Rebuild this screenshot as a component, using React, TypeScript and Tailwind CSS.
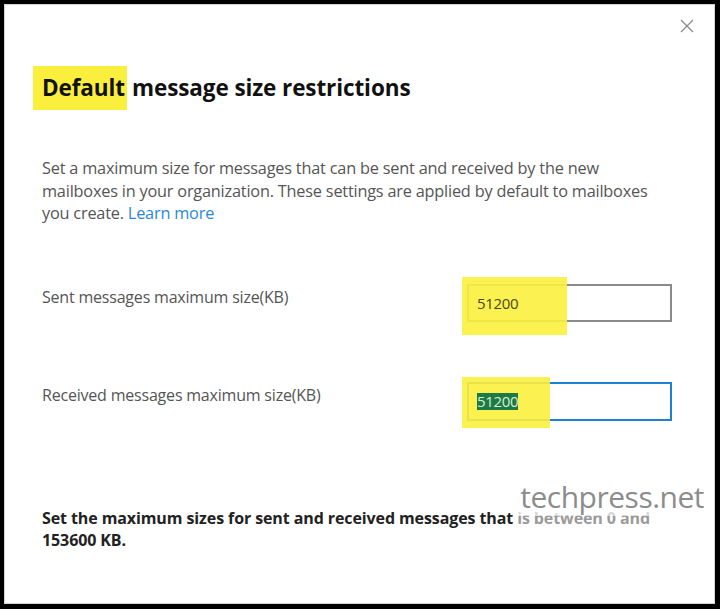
import { useState } from 'react'

const font = { fontFamily: '"Open Sans", "Noto Sans", Arial, sans-serif' }

export default function App() {
  const [sent, setSent] = useState('51200')

  return (
    <div className="w-[720px] h-[609px] bg-black pt-[4px] pl-[4px] pr-[5px] pb-[5px]" style={font}>
      <div className="relative h-full bg-white border border-[#d4d4d4] flex flex-col">
        {/* Close */}
        <div className="flex justify-end pt-[13px] pr-[19px]">
          <button className="w-[16px] h-[16px] text-[#8a8a8a]" title="Close">
            <svg width="16" height="16" viewBox="0 0 16 16" fill="none" stroke="currentColor" strokeWidth="1.3">
              <line x1="2" y1="2" x2="14" y2="14" />
              <line x1="14" y1="2" x2="2" y2="14" />
            </svg>
          </button>
        </div>

        {/* Title */}
        <div className="pl-[28px] mt-[32px] flex">
          <h1 className="flex items-center text-[22.5px] font-bold text-[#111] tracking-[-0.1px]">
            <span className="bg-[#fbef3d] h-[44px] flex items-center pl-[9px] pr-[2px]">Default</span>
            <span className="ml-[5px]">message size restrictions</span>
          </h1>
        </div>

        {/* Description */}
        <p className="mt-[47px] pl-[37px] text-[16.3px] leading-[22.5px] text-[#555] tracking-[-0.2px]">
          Set a maximum size for messages that can be sent and received by the new
          <br />
          mailboxes in your organization. These settings are applied by default to mailboxes
          <br />
          you create. <a className="text-[#2b88d8]">Learn more</a>
        </p>

        {/* Fields */}
        <div className="mt-[59px] flex items-center pl-[37px] pr-[42px]">
          <label className="flex-1 text-[16px] text-[#555] tracking-[-0.2px] -mt-[12px]">Sent messages maximum size(KB)</label>
          <div className="relative w-[205px] h-[38px] border-2 border-[#8a8a8a] bg-white">
            <div className="absolute -left-[7px] -top-[9px] w-[105px] h-[58px] bg-[#fbef3d]/90" />
            <input
              value={sent}
              onChange={e => setSent(e.target.value)}
              className="relative w-full h-full bg-transparent px-[8px] text-[15px] text-[#4a4a1c] outline-none tracking-[-0.3px]"
            />
          </div>
        </div>

        <div className="mt-[60px] flex items-center pl-[37px] pr-[42px]">
          <label className="flex-1 text-[16px] text-[#555] tracking-[-0.2px] -mt-[12px]">Received messages maximum size(KB)</label>
          <div className="relative w-[205px] h-[39px] border-2 border-[#1f7fd0] bg-white">
            <div className="absolute -left-[7px] -top-[7px] w-[88px] h-[51px] bg-[#fbef3d]/90" />
            <div className="relative h-full flex items-center px-[8px]">
              <span className="bg-[#1d7a48] text-[#d8f0c8] text-[15px] leading-[17px] tracking-[-0.3px]">51200</span>
            </div>
          </div>
        </div>

        {/* Footer note */}
        <div className="relative mt-[86px] pl-[37px]">
          <p className="text-[16px] font-bold leading-[22px] text-[#222] tracking-[-0.1px]">
            Set the maximum sizes for sent and received messages that <span className="text-[#9a9a9a]">is between 0 and</span>
            <br />
            153600 KB.
          </p>
          <span className="absolute right-[8px] -top-[29px] text-[30px] leading-[38px] text-[#8c8c8c] tracking-[-0.5px] bg-white/60 px-[2px]">
            techpress.net
          </span>
        </div>
      </div>
    </div>
  )
}
